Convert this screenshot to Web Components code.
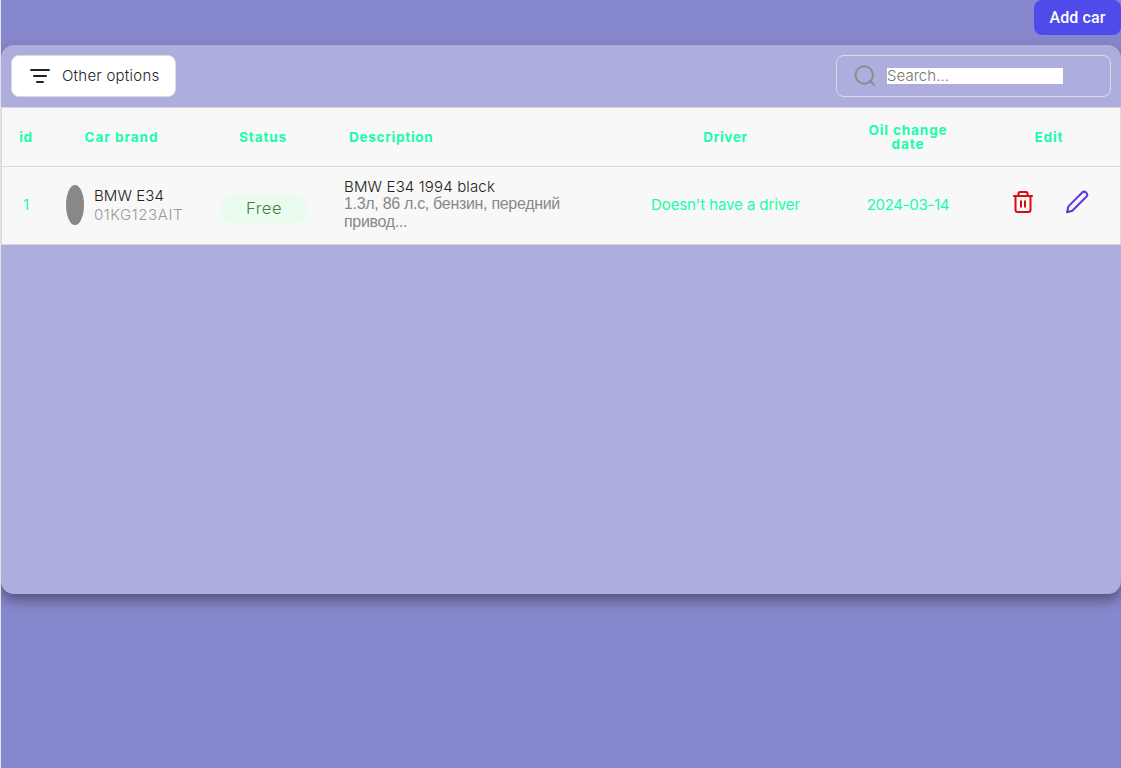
<!DOCTYPE html>
<html lang="en">
<head>
<meta charset="utf-8">
<title>Cars</title>
<style>
html,body{margin:0;height:100%;overflow:hidden}
body{background:#e4e3e8;font-family:Inter,"Liberation Sans",sans-serif;font-size:15px;color:#222}
</style>
</head>
<body>
<cars-page></cars-page>
<script>
const define = (name, html, ready) => {
  const template = document.createElement('template');
  template.innerHTML = html;
  customElements.define(name, class extends HTMLElement {
    connectedCallback() {
      if (this.shadowRoot) return;
      this.attachShadow({mode: 'open'}).append(template.content.cloneNode(true));
      if (ready) ready(this);
    }
  });
};

/* A single line of text tracked to a given width. */
define('tracked-text', `<style>:host{display:block;white-space:nowrap;width:max-content}span{display:inline-block}</style><span><slot></slot></span>`, el => {
  const span = el.shadowRoot.querySelector('span');
  const natural = span.getBoundingClientRect().width;
  const spacing = (el.getAttribute('width') - natural) / el.textContent.length;
  span.style.letterSpacing = spacing.toFixed(3) + 'px';
});

define('add-button', `<style>
:host{display:block}
button{display:flex;align-items:center;justify-content:center;width:87px;height:35px;padding:0;border:0;border-radius:8px;background:#4f4aea;color:#fff;font:500 16px/18px Roboto,sans-serif}
</style><button><tracked-text width="56">Add car</tracked-text></button>`);

define('options-button', `<style>
:host{display:block}
button{box-sizing:border-box;display:flex;align-items:center;width:165px;height:42px;padding:0 0 0 18px;border:1px solid #dcdcdc;border-radius:8px;background:#fff;color:#252525;font:300 15px/18px Inter,sans-serif}
svg{display:block;margin-right:12px}
</style><button><svg width="20" height="16" viewBox="0 0 20 16" fill="none" stroke="#222" stroke-width="2" stroke-linecap="round"><path d="M1 2h18M4 8h12M7 14h6"/></svg><tracked-text width="97.5">Other options</tracked-text></button>`);

define('search-box', `<style>
:host{box-sizing:border-box;display:flex;align-items:center;width:275px;height:42px;padding-left:17px;border:1px solid #dcdcdc;border-radius:8px}
svg{display:block;margin-right:9px}
.field{width:176px;height:16px;background:#fff;color:#757575;font:300 15px/16px Inter,sans-serif}
</style><svg width="24" height="24" viewBox="0 0 24 24" fill="none" stroke="#8b8b92" stroke-width="2" stroke-linecap="round"><circle cx="10.2" cy="11" r="8.7"/><path d="m16.500 17.3 3.500 3.700"/></svg><div class="field"><tracked-text width="62">Search...</tracked-text></div>`);

define('status-pill', `<style>
:host{display:flex;align-items:center;justify-content:center;width:90px;height:30px;border-radius:15px;background:#ebfcef;color:#3d8049;font:300 16.5px/20px Inter,sans-serif}
::slotted(*){margin-top:-2px}
</style><slot></slot>`);

define('edit-actions', `<style>
:host{display:flex;gap:30px}svg{display:block}
</style>
<svg width="24" height="24" viewBox="0 0 24 24" fill="none" stroke="#dc0a0a" stroke-width="2" stroke-linejoin="round"><path d="M2.2 6h19.6M7.5 6V3.5Q7.5 2 9 2h6q1.500 0 1.500 1.500V6M4.500 6v14q0 2 2 2h11q2 0 2-2V6M10 10.500v7M14 10.500v7"/></svg>
<svg width="24" height="24" viewBox="0 0 24 24" fill="none" stroke="#5f35dc" stroke-width="2" stroke-linejoin="round"><path d="M17 2.700a2.900 2.900 0 0 1 4.300 4.100L7.300 20.800 2 22.200l1.400-5.800Z"/></svg>`);

define('table-row', `<style>
:host{box-sizing:border-box;display:grid;grid-template-columns:48px 143px 140px 300px 185px 180px 102px;align-items:center;justify-items:center;background:#f8f8f8;border:1px solid #d9d9dc;border-top:0;color:#19fcaa}
:host([head]){height:60px;border-top:1px solid #d9d9dc;font:700 13.5px/14px Inter,sans-serif;padding-bottom:1px}
:host(:not([head])){height:78px;padding-bottom:2px;font:400 15px/18px Inter,sans-serif}
::slotted(.desc){justify-self:start}
</style><slot></slot>`);

define('car-brand', `<style>
:host{display:flex;align-items:center;justify-self:start;gap:10px;padding-left:16px;font:300 15px/19px Inter,sans-serif}
.photo{width:18px;height:40px;border-radius:50%;background:#888}
.name{color:#222}.plate{color:#999}
.text{padding-top:1px}
</style><div class="photo"></div><div class="text"><div class="name"><tracked-text width="70">BMW E34</tracked-text></div><div class="plate"><tracked-text width="89">01KG123AIT</tracked-text></div></div>`);

define('car-description', `<style>
:host{display:block;justify-self:start;padding-left:11px;font:300 15px/18px Inter,sans-serif;color:#222}
.more{font:16px/18px "Liberation Sans",sans-serif;color:#888}
.first{height:17px}
</style><div class="first"><tracked-text width="151">BMW E34 1994 black</tracked-text></div><div class="more"><tracked-text width="216">1.3л, 86 л.с, бензин, передний</tracked-text><tracked-text width="63">привод...</tracked-text></div>`);

define('cars-card', `<style>
:host{display:flex;flex-direction:column;height:549px;margin-top:10px;border-radius:13px;background:#aeaede;box-shadow:0 6px 13px rgba(0,0,0,.4);overflow:hidden}
.bar{box-sizing:border-box;display:flex;justify-content:space-between;height:62px;padding:10px 10px 0}
.two{display:grid;justify-items:center}
edit-actions{margin:0 0 6px 1px}
status-pill{margin:8px 0 0 2px}
</style>
<div class="bar"><options-button></options-button><search-box></search-box></div>
<table-row head>
<tracked-text width="13.500">id</tracked-text><tracked-text width="74">Car brand</tracked-text><tracked-text width="48">Status</tracked-text><tracked-text class="desc" style="padding-left:16px" width="84.500">Description</tracked-text><tracked-text width="44.500">Driver</tracked-text><div class="two"><tracked-text width="79">Oil change</tracked-text><tracked-text width="33">date</tracked-text></div><tracked-text width="29">Edit</tracked-text>
</table-row>
<table-row>
<span>1</span><car-brand></car-brand><status-pill><tracked-text width="36">Free</tracked-text></status-pill><car-description></car-description><tracked-text width="149">Doesn't have a driver</tracked-text><tracked-text width="82.500">2024-03-14</tracked-text><edit-actions></edit-actions>
</table-row>`);

define('cars-page', `<style>
:host{display:block;box-sizing:border-box;height:100vh;margin-left:1px;background:#8787cd;overflow:hidden}
header{display:flex;justify-content:flex-end}
</style><header><add-button></add-button></header><cars-card></cars-card>`);
</script>
</body>
</html>
